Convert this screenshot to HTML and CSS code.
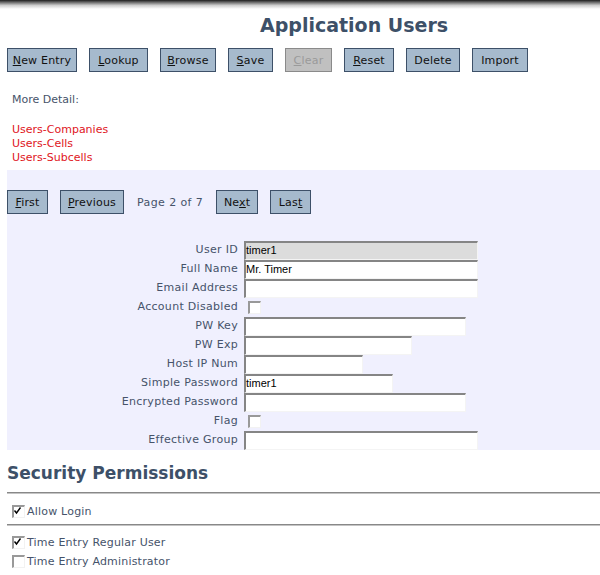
FILE: index.html
```html
<!DOCTYPE html>
<html>
<head>
<meta charset="utf-8">
<link rel="stylesheet" href="styles.css">
</head>
<body>
<div class="topbar"></div>
<div class="page">
  <h1 class="title">Application Users</h1>
  <div class="toolbar">
    <button class="btn w70"><u>N</u>ew Entry</button>
    <button class="btn w59"><u>L</u>ookup</button>
    <button class="btn w56"><u>B</u>rowse</button>
    <button class="btn w45"><u>S</u>ave</button>
    <button class="btn w47 disabled"><u>C</u>lear</button>
    <button class="btn w50"><u>R</u>eset</button>
    <button class="btn w54">Delete</button>
    <button class="btn w56">Import</button>
  </div>
  <div class="detail">
    <div class="detail-label">More Detail:</div>
    <div class="links">
      <a class="link">Users-Companies</a>
      <a class="link">Users-Cells</a>
      <a class="link">Users-Subcells</a>
    </div>
  </div>
  <div class="panel">
    <div class="pager">
      <button class="btn w41"><u>F</u>irst</button>
      <button class="btn w64"><u>P</u>revious</button>
      <span class="pageinfo">Page 2 of 7</span>
      <button class="btn w42">Ne<u>x</u>t</button>
      <button class="btn w41">Las<u>t</u></button>
    </div>
    <div class="form">
      <label class="lbl">User ID</label><div class="field"><span class="input ro i234">timer1</span></div>
      <label class="lbl">Full Name</label><div class="field"><span class="input i234">Mr. Timer</span></div>
      <label class="lbl">Email Address</label><div class="field"><span class="input i234"></span></div>
      <label class="lbl">Account Disabled</label><div class="field"><span class="cb"></span></div>
      <label class="lbl">PW Key</label><div class="field"><span class="input i222"></span></div>
      <label class="lbl">PW Exp</label><div class="field"><span class="input i168"></span></div>
      <label class="lbl">Host IP Num</label><div class="field"><span class="input i119"></span></div>
      <label class="lbl">Simple Password</label><div class="field"><span class="input i149">timer1</span></div>
      <label class="lbl">Encrypted Password</label><div class="field"><span class="input i222"></span></div>
      <label class="lbl">Flag</label><div class="field"><span class="cb"></span></div>
      <label class="lbl">Effective Group</label><div class="field"><span class="input i234"></span></div>
    </div>
  </div>
  <h2 class="section">Security Permissions</h2>
  <hr class="rule rule-top">
  <div class="perm login"><span class="cb"><svg viewBox="0 0 10 10" width="10" height="10"><polyline points="1.5,4.5 3.5,7 7.5,1.5" fill="none" stroke="#000" stroke-width="1.4"/></svg></span><span>Allow Login</span></div>
  <hr class="rule rule-mid">
  <div class="perms">
    <div class="perm"><span class="cb"><svg viewBox="0 0 10 10" width="10" height="10"><polyline points="1.5,4.5 3.5,7 7.5,1.5" fill="none" stroke="#000" stroke-width="1.4"/></svg></span><span>Time Entry Regular User</span></div>
    <div class="perm"><span class="cb"></span><span>Time Entry Administrator</span></div>
  </div>
</div>
</body>
</html>
```
FILE: styles.css
```css
html, body {
  margin: 0;
  padding: 0;
  background: #fff;
  font-family: "DejaVu Sans", Verdana, sans-serif;
  font-size: 11px;
  color: #3d4a5c;
  overflow: hidden;
}
.topbar {
  height: 9px;
  background: linear-gradient(#1e1e1e, #6a6a6a 25%, #cfcfcf 60%, #fff);
}
.page {
  padding-left: 7px;
}
.title {
  margin: 4px 0 0 253px;
  font-size: 19px;
  font-weight: bold;
  color: #3d5068;
  line-height: 24px;
}
.toolbar {
  display: flex;
  gap: 12px;
  margin-top: 11px;
}
.btn {
  box-sizing: border-box;
  font-family: "DejaVu Sans", Verdana, sans-serif;
  font-size: 11px;
  color: #111;
  background: #a6bacd;
  border: 1px solid #3d5068;
  height: 24px;
  padding: 0;
  margin: 0;
  text-align: center;
  white-space: nowrap;
  letter-spacing: 0.2px;
}
.btn.disabled {
  background: #c0c0c0;
  border-color: #8a8a8a;
  color: #9a9a9a;
}
.w41 { width: 41px; }
.w42 { width: 42px; }
.w45 { width: 45px; }
.w47 { width: 47px; }
.w50 { width: 50px; }
.w54 { width: 54px; }
.w56 { width: 56px; }
.w59 { width: 59px; }
.w64 { width: 64px; }
.w70 { width: 70px; }
.detail {
  padding: 21px 0 0 5px;
  color: #46536a;
}
.detail-label {
  line-height: 14px;
}
.links {
  margin-top: 16px;
  display: flex;
  flex-direction: column;
}
.link {
  color: #e0161d;
  line-height: 14px;
}
.panel {
  margin-top: 5px;
  background: #f0f0fe;
  padding: 20px 0 1px 0;
  height: 259px;
}
.pager {
  display: flex;
  align-items: center;
  gap: 12px;
}
.pageinfo {
  color: #46536a;
  letter-spacing: 0.4px;
  padding: 0 1px;
}
.form {
  display: grid;
  grid-template-columns: 231px auto;
  column-gap: 6px;
  row-gap: 1px;
  margin-top: 27px;
}
.lbl {
  text-align: right;
  color: #46536a;
  line-height: 18px;
  letter-spacing: 0.3px;
}
.field {
  height: 18px;
  display: flex;
  align-items: center;
}
.input {
  box-sizing: border-box;
  height: 19px;
  background: #fff;
  border-top: 2px solid #858585;
  border-left: 2px solid #858585;
  border-right: 1px solid #f4f4f4;
  border-bottom: 1px solid #f4f4f4;
  font-family: "Liberation Sans", Arial, sans-serif;
  font-size: 11px;
  color: #000;
  line-height: 15px;
  align-self: flex-start;
}
.input.ro { background: #dcdcdc; }
.i234 { width: 234px; }
.i222 { width: 222px; }
.i168 { width: 168px; }
.i149 { width: 149px; }
.i119 { width: 119px; }
.cb {
  box-sizing: border-box;
  display: inline-block;
  flex: none;
  width: 13px;
  height: 13px;
  background: #fff;
  border-top: 2px solid #999;
  border-left: 2px solid #999;
  border-right: 1px solid #f2f2f2;
  border-bottom: 1px solid #f2f2f2;
  margin-left: 4px;
}
.cb svg { display: block; margin: -1px 0 0 -1px; }
.section {
  margin: 12px 0 0 0;
  font-size: 17px;
  font-weight: bold;
  color: #3d5068;
  line-height: 22px;
}
.rule {
  border: 0;
  border-top: 1px solid #888;
  border-bottom: 1px solid #c4c4c4;
  height: 0;
}
.rule-top { margin: 8px 0 0 0; }
.rule-mid { margin: 3px 0 0 0; }
.perm {
  display: flex;
  align-items: center;
  gap: 2px;
  line-height: 19px;
  color: #46536a;
  letter-spacing: 0.2px;
}
.perm .cb { margin-left: 5px; }
.login { margin-top: 8px; }
.perms { margin-top: 7px; }
```
